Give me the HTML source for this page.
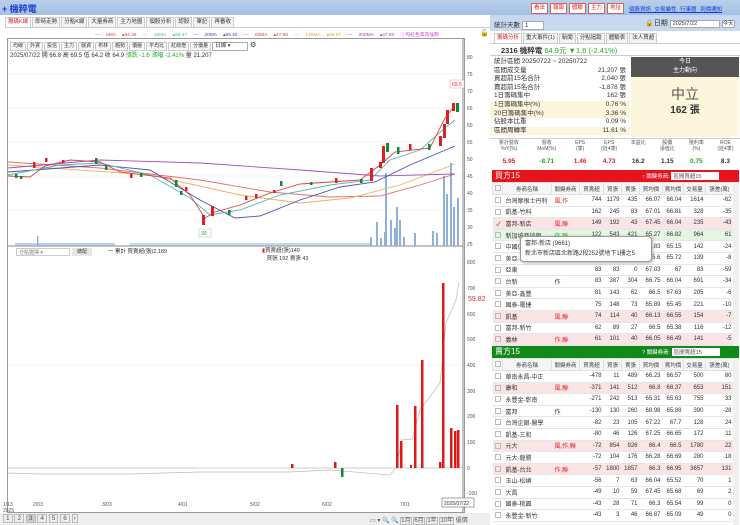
<!DOCTYPE html>
<html><head><meta charset="utf-8">
<style>
*{margin:0;padding:0;box-sizing:border-box}
body{width:740px;height:525px;overflow:hidden;background:#fff;font-family:"Liberation Sans","Noto Sans CJK TC",sans-serif;font-size:7px;color:#333;position:relative}
.a{position:absolute;white-space:nowrap}
.top{left:0;top:0;width:740px;height:15px;background:linear-gradient(#b9d0ec,#a3c0e4)}
.btn{display:inline-block;border:1px solid #c66;background:#fff;color:#d22;font-size:5.5px;line-height:7px;padding:1px 2px;margin-right:2px}
.tab{display:inline-block;border:1px solid #ccc;border-bottom:none;background:#f4f4f4;padding:1px 2px;font-size:5.5px;line-height:7px;margin-right:1px}
.tb{display:inline-block;border:1px solid #ccc;background:#f8f8f8;padding:0 2px;font-size:5px;line-height:7px;margin-right:1px}
table{border-collapse:collapse;table-layout:fixed}
.bt td{border-bottom:1px solid #e6e6e6;height:11.6px;font-size:6px;text-align:right;padding-right:2px;white-space:nowrap;overflow:hidden}
.bt td:nth-child(2){text-align:left;padding-left:3px}
.bt td:nth-child(3){text-align:left;padding-left:3px;color:#d22}
.bt th{font-weight:normal;font-size:5.5px;height:12px;background:#f6f6f6;border:1px solid #e0e0e0;color:#444;overflow:hidden}
.cb{display:inline-block;width:6px;height:6px;border:1px solid #bbb;vertical-align:middle}
.pk td{background:#fbe4e6}.gr td{background:#e3f5e3}
.st div{height:8.6px;line-height:8.6px;font-size:6.5px;padding:0 4px;display:flex;justify-content:space-between}
.y{background:#fdf6dc}
</style></head><body>
<div class="a top"></div>
<div class="a" style="left:2px;top:2px;font-size:9px;color:#1a3cd0;font-weight:bold">+ 機粹電</div>
<div class="a" style="left:531px;top:3px"><span class="btn">看法</span><span class="btn">報報</span><span class="btn">體驗</span><span class="btn">主力</span><span class="btn">地址</span></div>
<div class="a" style="left:629px;top:5px;font-size:5.5px;color:#1a3cd0;text-decoration:underline;word-spacing:2px">個股資訊 交易屬性 行事曆 到價通知</div>

<!-- left tabs -->
<div class="a" style="left:5px;top:17px;width:485px;border-bottom:1px solid #ccc;height:11px"><span class="tab" style="color:#d22;background:#fff">籌碼K線</span><span class="tab">即時走勢</span><span class="tab">分點K線</span><span class="tab">大量券商</span><span class="tab">主力地圖</span><span class="tab">個股分析</span><span class="tab">認股</span><span class="tab">筆記</span><span class="tab">再審收</span></div>
<div class="a" style="left:95px;top:31px;font-size:4.8px;word-spacing:5px"><span style="color:#d44">— 5MA ▴64.36</span> <span style="color:#4bb">— 10MA ▴59.47</span> <span style="color:#44a">— 20MA ▴56.40</span> <span style="color:#d44">— 60MA ▴47.58</span> <span style="color:#e9a030">— 120MA ▴50.67</span> <span style="color:#a4a">— 200MA ▴47.60</span> <span style="color:#c4c">ⓘ均紅色高為強勢</span></div>
<div class="a" style="left:480px;top:29px;font-size:7px">🔓</div>
<div class="a" style="left:7px;top:38px;width:458px;height:475px;border:1px solid #999"></div>
<div class="a" style="left:10px;top:41px"><span class="tb">均線</span><span class="tb">外資</span><span class="tb">投信</span><span class="tb">主力</span><span class="tb">融資</span><span class="tb">布林</span><span class="tb">趨勢</span><span class="tb">價壓</span><span class="tb">平均比</span><span class="tb">紅綠燈</span><span class="tb">分價量</span><span style="display:inline-block;border:1px solid #aaa;width:36px;padding:0 2px;font-size:5.5px;line-height:7px;background:#fff">日線 ▾</span> <span style="font-size:7px">⚙</span></div>
<div class="a" style="left:10px;top:50px;font-size:6px">2025/07/22 開 66.8 高 69.5 低 64.2 收 64.9 <span style="color:#2a2">漲跌 -1.6 漲幅 -2.41%</span> 量 21,207</div>

<svg class="a" style="left:0;top:0" width="490" height="525">
<g stroke="#eee" stroke-width="0.6"><line x1="8" y1="74" x2="463" y2="74"/><line x1="8" y1="108" x2="463" y2="108"/><line x1="8" y1="142" x2="463" y2="142"/><line x1="8" y1="176" x2="463" y2="176"/><line x1="8" y1="210" x2="463" y2="210"/><line x1="8" y1="365" x2="463" y2="365"/></g>
<line x1="8" y1="246" x2="463" y2="246" stroke="#888"/>
<line x1="463" y1="38" x2="463" y2="513" stroke="#888"/>
<g font-size="5" fill="#555">
<text x="467" y="59">80</text><text x="467" y="76">75</text><text x="467" y="93">70</text><text x="467" y="110">65</text><text x="467" y="127">60</text><text x="467" y="144">55</text><text x="467" y="161">50</text><text x="467" y="178">45</text><text x="467" y="195">40</text><text x="467" y="212">35</text><text x="467" y="229">30</text><text x="467" y="246">25</text>
<text x="467" y="264">800</text><text x="467" y="290">700</text><text x="467" y="316">600</text><text x="467" y="341">500</text><text x="467" y="367">400</text><text x="467" y="393">300</text><text x="467" y="418">200</text><text x="467" y="444">100</text><text x="467" y="470">0</text><text x="467" y="495">-100</text>
<text x="3" y="506">1/13</text><text x="3" y="512">2025</text><text x="33" y="506">2/03</text><text x="102" y="506">3/03</text><text x="178" y="506">4/01</text><text x="250" y="506">5/02</text><text x="322" y="506">6/02</text><text x="400" y="506">7/01</text>
</g>
<rect x="442" y="498" width="32" height="9" fill="#fff" stroke="#666" stroke-width="0.6"/><text x="444" y="505" font-size="5" fill="#333">2025/07/22</text>
<text x="468" y="301" font-size="7" fill="#d33">59.82</text>
<rect x="450" y="80" width="14" height="8" fill="#fff" stroke="#f99" stroke-width="0.5"/><text x="452" y="86" font-size="5" fill="#d33">69.5</text>
<rect x="199" y="229" width="12" height="8" fill="#fff" stroke="#9c9" stroke-width="0.5"/><text x="201" y="235" font-size="5" fill="#393">30</text>
<g fill="#8fb0d8">
<rect x="37" y="236" width="1.5" height="10"/><rect x="370" y="237" width="2" height="9"/><rect x="376" y="222" width="2" height="24"/><rect x="380" y="238" width="2" height="8"/><rect x="384" y="232" width="2" height="14"/><rect x="385" y="173" width="2" height="73"/><rect x="390" y="220" width="2" height="26"/><rect x="394" y="228" width="2" height="18"/><rect x="396" y="207" width="2" height="39"/><rect x="399" y="220" width="2" height="26"/><rect x="403" y="237" width="2" height="9"/><rect x="414" y="233" width="2" height="13"/><rect x="432" y="231" width="2" height="15"/><rect x="436" y="233" width="2" height="13"/><rect x="443" y="176" width="2" height="70"/><rect x="446" y="194" width="2" height="52"/><rect x="450" y="163" width="2" height="83"/><rect x="453" y="207" width="2" height="39"/><rect x="457" y="198" width="2" height="48"/>
<rect x="15" y="243" width="100" height="3" opacity=".6"/><rect x="130" y="243" width="240" height="3" opacity=".5"/>
</g>
<g fill="none" stroke-width="0.9">
<polyline stroke="#e07070" points="8,162 100,168 200,180 270,192 330,197 380,196 420,185 455,174"/>
<polyline stroke="#f0b060" points="8,165 150,175 240,195 300,203 350,198 400,185 455,164"/>
<polyline stroke="#a050c0" points="8,168 100,160 200,163 300,170 380,176 455,174"/>
<polyline stroke="#5050b0" points="8,172 100,165 150,170 200,200 235,218 260,216 300,200 340,187 375,182 410,165 455,146"/>
<polyline stroke="#50b8b8" points="8,175 60,165 100,163 150,175 190,198 210,215 240,210 280,195 330,185 370,180 390,160 420,150 445,128 455,120"/>
<polyline stroke="#e04040" points="8,176 30,177 45,166 70,160 100,162 120,172 170,178 190,195 205,218 215,212 240,205 270,193 300,184 360,180 380,165 395,152 430,148 445,118 455,105"/>
</g>
<g fill="#e02020">
<rect x="33" y="162" width="2.5" height="6"/><rect x="45" y="158" width="2.5" height="4"/><rect x="62" y="160" width="2.5" height="3"/><rect x="130" y="174" width="2.5" height="4"/><rect x="185" y="187" width="2.5" height="4"/><rect x="202" y="215" width="3" height="10"/><rect x="211" y="206" width="3" height="10"/><rect x="245" y="196" width="2.5" height="4"/><rect x="255" y="194" width="2.5" height="4"/><rect x="273" y="190" width="2.5" height="3"/><rect x="335" y="178" width="2.5" height="5"/><rect x="370" y="168" width="3" height="13"/><rect x="379" y="162" width="3" height="6"/><rect x="382" y="146" width="3" height="17"/><rect x="409" y="144" width="2.5" height="6"/><rect x="439" y="136" width="3" height="10"/><rect x="443" y="124" width="3" height="14"/><rect x="446" y="110" width="3" height="14"/><rect x="452" y="103" width="3" height="8"/>
</g>
<g fill="#108a30">
<rect x="15" y="174" width="2.5" height="4"/><rect x="20" y="176" width="2.5" height="3"/><rect x="95" y="158" width="2.5" height="6"/><rect x="105" y="166" width="2.5" height="4"/><rect x="140" y="173" width="2.5" height="4"/><rect x="175" y="180" width="2.5" height="7"/><rect x="180" y="191" width="2.5" height="4"/><rect x="228" y="210" width="2.5" height="5"/><rect x="280" y="181" width="2.5" height="5"/><rect x="310" y="182" width="2.5" height="3"/><rect x="360" y="179" width="2.5" height="4"/><rect x="386" y="143" width="3" height="9"/><rect x="397" y="147" width="2.5" height="7"/><rect x="428" y="144" width="2.5" height="6"/><rect x="456" y="103" width="3" height="9"/>
</g>
<line x1="8" y1="468" x2="463" y2="468" stroke="#999" stroke-width="0.6"/>
<polyline fill="none" stroke="#bbb" stroke-width="0.7" points="8,473 40,474 130,474 200,472 290,472 330,470 390,475 396,468 402,440 412,439 420,410 440,383 446,323 456,300 459,282"/>
<g fill="#e01818">
<rect x="396" y="405" width="2.5" height="63"/><rect x="400" y="441" width="2.5" height="27"/><rect x="414" y="406" width="2.5" height="62"/><rect x="421" y="360" width="2.5" height="108"/><rect x="442" y="283" width="2.5" height="185"/><rect x="450" y="428" width="2.5" height="40"/><rect x="454" y="431" width="2.5" height="37"/><rect x="457" y="430" width="2.5" height="38"/><rect x="439" y="462" width="2.5" height="6"/><rect x="334" y="462" width="2.5" height="6"/><rect x="291" y="464" width="2.5" height="4"/><rect x="410" y="465" width="2" height="3"/></g>
<rect x="341" y="468" width="2.5" height="9" fill="#108a30"/>
</svg>
<div class="a" style="left:16px;top:248px;width:54px;height:8px;border:1px solid #ccc;font-size:5px;color:#777;padding-left:2px">分點選擇 ▾</div>
<div class="a" style="left:72px;top:248px;width:20px;height:8px;background:#e6e6e6;font-size:5px;text-align:center">總配</div>
<div class="a" style="left:108px;top:247px;font-size:5.5px">一 累計 買賣超(張)2,189</div>
<div class="a" style="left:262px;top:247px;font-size:5.5px;line-height:8px"><span style="color:#d22">▮</span>買賣超(張)149<br>&nbsp;&nbsp;&nbsp;買張 192 賣張 43</div>
<div class="a" style="left:0;top:513px;width:490px;height:12px;background:#eee"></div>
<div class="a" style="left:3px;top:515px;font-size:6.5px;color:#555"><span style="border:1px solid #bbb;padding:0 2px">1</span> <span style="border:1px solid #bbb;padding:0 2px">2</span> <span style="border:1px solid #bbb;padding:0 2px;background:#ccc">3</span> <span style="border:1px solid #bbb;padding:0 2px">4</span> <span style="border:1px solid #bbb;padding:0 2px">5</span> <span style="border:1px solid #bbb;padding:0 2px">6</span> <span style="border:1px solid #bbb;padding:0 1px">›</span></div>
<div class="a" style="left:370px;top:515px;font-size:6px;color:#555">▭ ▾ 🔍 🔍 <span style="border:1px solid #bbb">1月</span> <span style="border:1px solid #bbb">6月</span> <span style="border:1px solid #bbb">1年</span> <span style="border:1px solid #bbb">10年</span> 還價</div>

<!-- right panel -->
<div class="a" style="left:490px;top:15px;width:250px;height:16px;background:#c8d8ee"></div>
<div class="a" style="left:494px;top:19px;font-size:6.5px">統計天數 <span style="display:inline-block;width:22px;background:#fff;border:1px solid #aaa;padding:0 2px">1</span></div>
<div class="a" style="left:645px;top:18px;font-size:7px">🔒日期 <span style="display:inline-block;width:50px;background:#fff;border:1px solid #aaa;font-size:5.5px;padding:0 2px">2025/7/22</span> <span style="background:#fff;border:1px solid #aaa;font-size:5.5px">今天</span></div>
<div class="a" style="left:494px;top:33px"><span class="tab" style="color:#d22;background:#fff">籌碼分析</span><span class="tab">重大事件(1)</span><span class="tab">新聞</span><span class="tab">分點追蹤</span><span class="tab">體驗表</span><span class="tab">法人買超</span></div>
<div class="a" style="left:490px;top:43px;width:250px;height:13px;border-top:1px solid #ccc;border-bottom:1px solid #ccc"></div>
<div class="a" style="left:501px;top:45px;font-size:7.5px;font-weight:bold">2316 機粹電 <span style="color:#2a2;font-weight:normal">64.9元 ▼1.6 (-2.41%)</span></div>
<div class="a st" style="left:490px;top:58px;width:140px">
<div>統計區間 20250722 ~ 20250722<span></span></div>
<div>區間成交量<span>21,207 張</span></div>
<div>買超前15名合計<span>2,040 張</span></div>
<div>賣超前15名合計<span>-1,878 張</span></div>
<div>1日籌碼集中<span>162 張</span></div>
<div class="y">1日籌碼集中(%)<span>0.76 %</span></div>
<div class="y">20日籌碼集中(%)<span>3.36 %</span></div>
<div>佔股本比重<span>0.09 %</span></div>
<div class="y">區間周轉率<span>11.61 %</span></div>
</div>
<div class="a" style="left:631px;top:57px;width:108px;height:80px;background:#fdf6dc"></div>
<div class="a" style="left:631px;top:57px;width:108px;height:20px;background:#555;color:#fff;text-align:center;font-size:6px;line-height:9px;padding-top:1px">今日<br>主力動向</div>
<div class="a" style="left:631px;top:84px;width:108px;text-align:center;font-size:14px;color:#555">中立</div>
<div class="a" style="left:631px;top:101px;width:108px;text-align:center;font-size:10px;font-weight:bold">162 張</div>
<div class="a" style="left:490px;top:138px;width:250px;height:32px;border-top:1px solid #ccc;background:#fff"></div>
<div class="a" style="left:490px;top:140px;width:250px;display:flex;font-size:5px;text-align:center;color:#555;line-height:6px">
<div style="flex:1.3">累計營收<br>YoY(%)</div><div style="flex:1.3">營收<br>MoM(%)</div><div style="flex:1">EPS<br>(季)</div><div style="flex:1">EPS<br>(近4季)</div><div style="flex:1">本益比</div><div style="flex:1">股價<br>淨值比</div><div style="flex:1">殖利率<br>(%)</div><div style="flex:1">ROE<br>(近4季)</div></div>
<div class="a" style="left:490px;top:158px;width:250px;display:flex;font-size:6.5px;font-weight:bold;text-align:center">
<div style="flex:1.3;color:#d22">5.95</div><div style="flex:1.3;color:#2a2">-8.71</div><div style="flex:1;color:#d22">1.46</div><div style="flex:1;color:#d22">4.73</div><div style="flex:1">16.2</div><div style="flex:1">1.15</div><div style="flex:1;color:#2a2">0.75</div><div style="flex:1">8.3</div></div>

<div class="a" style="left:492px;top:170px;width:247px;height:12px;background:#e8141c;color:#fff;font-size:8px;padding-left:3px">買方15<span style="position:absolute;left:150px;top:2px;font-size:5.5px">↑ 關鍵券商: <span style="background:#fff;color:#555;padding:0 2px;display:inline-block;width:48px">區間買超15</span></span></div>
<table class="a bt" style="left:492px;top:182px;width:241px">
<colgroup><col style="width:10px"><col style="width:49px"><col style="width:28px"><col style="width:24px"><col style="width:18px"><col style="width:18px"><col style="width:23px"><col style="width:21px"><col style="width:22px"><col style="width:28px"></colgroup>
<tr><th><span class="cb"></span></th><th>券商名稱</th><th>關鍵券商</th><th>買賣超</th><th>買張</th><th>賣張</th><th>買均價</th><th>賣均價</th><th>交易量</th><th>張差(萬)</th></tr>
<tr><td><span class="cb"></span></td><td>台灣摩根士丹利</td><td>風,作</td><td>744</td><td>1179</td><td>435</td><td>66.07</td><td>66.04</td><td>1614</td><td>-62</td></tr>
<tr><td><span class="cb"></span></td><td>凱基-竹科</td><td></td><td>162</td><td>245</td><td>83</td><td>67.01</td><td>66.81</td><td>328</td><td>-35</td></tr>
<tr class="pk"><td>✓</td><td>富邦-新店</td><td>風,聯</td><td>149</td><td>192</td><td>43</td><td>67.45</td><td>66.04</td><td>235</td><td>-43</td></tr>
<tr class="gr"><td><span class="cb"></span></td><td>新加坡商瑞銀</td><td style="color:#2a2">作,聯</td><td>122</td><td>543</td><td>421</td><td>65.27</td><td>66.82</td><td>964</td><td>61</td></tr>
<tr><td><span class="cb"></span></td><td>中國信託</td><td></td><td>102</td><td>122</td><td>20</td><td>65.83</td><td>65.15</td><td>142</td><td>-24</td></tr>
<tr><td><span class="cb"></span></td><td>美亞-台中</td><td></td><td>86</td><td>112</td><td>27</td><td>65.6</td><td>65.72</td><td>139</td><td>-8</td></tr>
<tr><td><span class="cb"></span></td><td>亞東</td><td></td><td>83</td><td>83</td><td>0</td><td>67.03</td><td>67</td><td>83</td><td>-59</td></tr>
<tr><td><span class="cb"></span></td><td>台新</td><td style="color:#333">作</td><td>83</td><td>387</td><td>304</td><td>66.75</td><td>66.04</td><td>691</td><td>-34</td></tr>
<tr><td><span class="cb"></span></td><td>美亞-鑫豐</td><td></td><td>81</td><td>143</td><td>62</td><td>66.5</td><td>67.63</td><td>205</td><td>-6</td></tr>
<tr><td><span class="cb"></span></td><td>國泰-電捷</td><td></td><td>75</td><td>148</td><td>73</td><td>65.89</td><td>65.45</td><td>221</td><td>-10</td></tr>
<tr class="pk"><td><span class="cb"></span></td><td>凱基</td><td>風,聯</td><td>74</td><td>114</td><td>40</td><td>66.13</td><td>66.55</td><td>154</td><td>-7</td></tr>
<tr><td><span class="cb"></span></td><td>富邦-新竹</td><td></td><td>62</td><td>89</td><td>27</td><td>66.5</td><td>65.38</td><td>116</td><td>-12</td></tr>
<tr class="pk"><td><span class="cb"></span></td><td>義林</td><td>作,聯</td><td>61</td><td>101</td><td>40</td><td>66.05</td><td>66.49</td><td>141</td><td>-5</td></tr>
</table>
<div class="a" style="left:520px;top:236px;width:132px;height:26px;background:#fff;border:1px solid #999;border-radius:4px;box-shadow:1px 1px 3px #aaa;font-size:6px;padding:2px 4px;line-height:10px">富邦-新店 (9661)<br>新北市新店區北新路2段252號地下1樓之5</div>
<div class="a" style="left:733px;top:182px;width:6px;height:162px;background:#f0f0f0"></div>

<div class="a" style="left:492px;top:346px;width:247px;height:12px;background:#118a1a;color:#fff;font-size:8px;padding-left:3px">賣方15<span style="position:absolute;left:150px;top:2px;font-size:5.5px">? 關鍵券商: <span style="background:#fff;color:#555;padding:0 2px;display:inline-block;width:48px">區間賣超15</span></span></div>
<table class="a bt" style="left:492px;top:358px;width:241px">
<colgroup><col style="width:10px"><col style="width:49px"><col style="width:28px"><col style="width:24px"><col style="width:18px"><col style="width:18px"><col style="width:23px"><col style="width:21px"><col style="width:22px"><col style="width:28px"></colgroup>
<tr><th><span class="cb"></span></th><th>券商名稱</th><th>關鍵券商</th><th>買賣超</th><th>買張</th><th>賣張</th><th>買均價</th><th>賣均價</th><th>交易量</th><th>張差(萬)</th></tr>
<tr><td><span class="cb"></span></td><td>華南永昌-中正</td><td></td><td>-478</td><td>11</td><td>489</td><td>66.23</td><td>66.57</td><td>500</td><td>80</td></tr>
<tr class="pk"><td><span class="cb"></span></td><td>康和</td><td>風,聯</td><td>-371</td><td>141</td><td>512</td><td>66.8</td><td>68.37</td><td>653</td><td>151</td></tr>
<tr><td><span class="cb"></span></td><td>永豐金-彰南</td><td></td><td>-271</td><td>242</td><td>513</td><td>65.31</td><td>65.63</td><td>755</td><td>33</td></tr>
<tr><td><span class="cb"></span></td><td>富邦</td><td style="color:#333">作</td><td>-130</td><td>130</td><td>260</td><td>68.98</td><td>65.88</td><td>390</td><td>-28</td></tr>
<tr><td><span class="cb"></span></td><td>台灣企銀-醫學</td><td></td><td>-82</td><td>23</td><td>105</td><td>67.22</td><td>67.7</td><td>128</td><td>24</td></tr>
<tr><td><span class="cb"></span></td><td>凱基-三和</td><td></td><td>-80</td><td>46</td><td>126</td><td>67.25</td><td>66.65</td><td>172</td><td>11</td></tr>
<tr class="pk"><td><span class="cb"></span></td><td>元大</td><td>風,作,聯</td><td>-72</td><td>854</td><td>926</td><td>66.4</td><td>66.5</td><td>1780</td><td>22</td></tr>
<tr><td><span class="cb"></span></td><td>元大-龍勝</td><td></td><td>-72</td><td>104</td><td>176</td><td>66.28</td><td>66.69</td><td>280</td><td>18</td></tr>
<tr class="pk"><td><span class="cb"></span></td><td>凱基-台北</td><td>作,聯</td><td>-57</td><td>1800</td><td>1857</td><td>66.3</td><td>66.95</td><td>3657</td><td>131</td></tr>
<tr><td><span class="cb"></span></td><td>玉山-松嶼</td><td></td><td>-56</td><td>7</td><td>63</td><td>66.04</td><td>65.52</td><td>70</td><td>1</td></tr>
<tr><td><span class="cb"></span></td><td>大昌</td><td></td><td>-49</td><td>10</td><td>59</td><td>67.45</td><td>65.68</td><td>69</td><td>2</td></tr>
<tr><td><span class="cb"></span></td><td>國泰-桃園</td><td></td><td>-43</td><td>28</td><td>71</td><td>66.3</td><td>65.54</td><td>99</td><td>0</td></tr>
<tr><td><span class="cb"></span></td><td>永豐金-新竹</td><td></td><td>-43</td><td>3</td><td>46</td><td>66.87</td><td>65.09</td><td>49</td><td>0</td></tr>
</table>
<div class="a" style="left:733px;top:358px;width:6px;height:167px;background:#f0f0f0"></div>
</body></html>
